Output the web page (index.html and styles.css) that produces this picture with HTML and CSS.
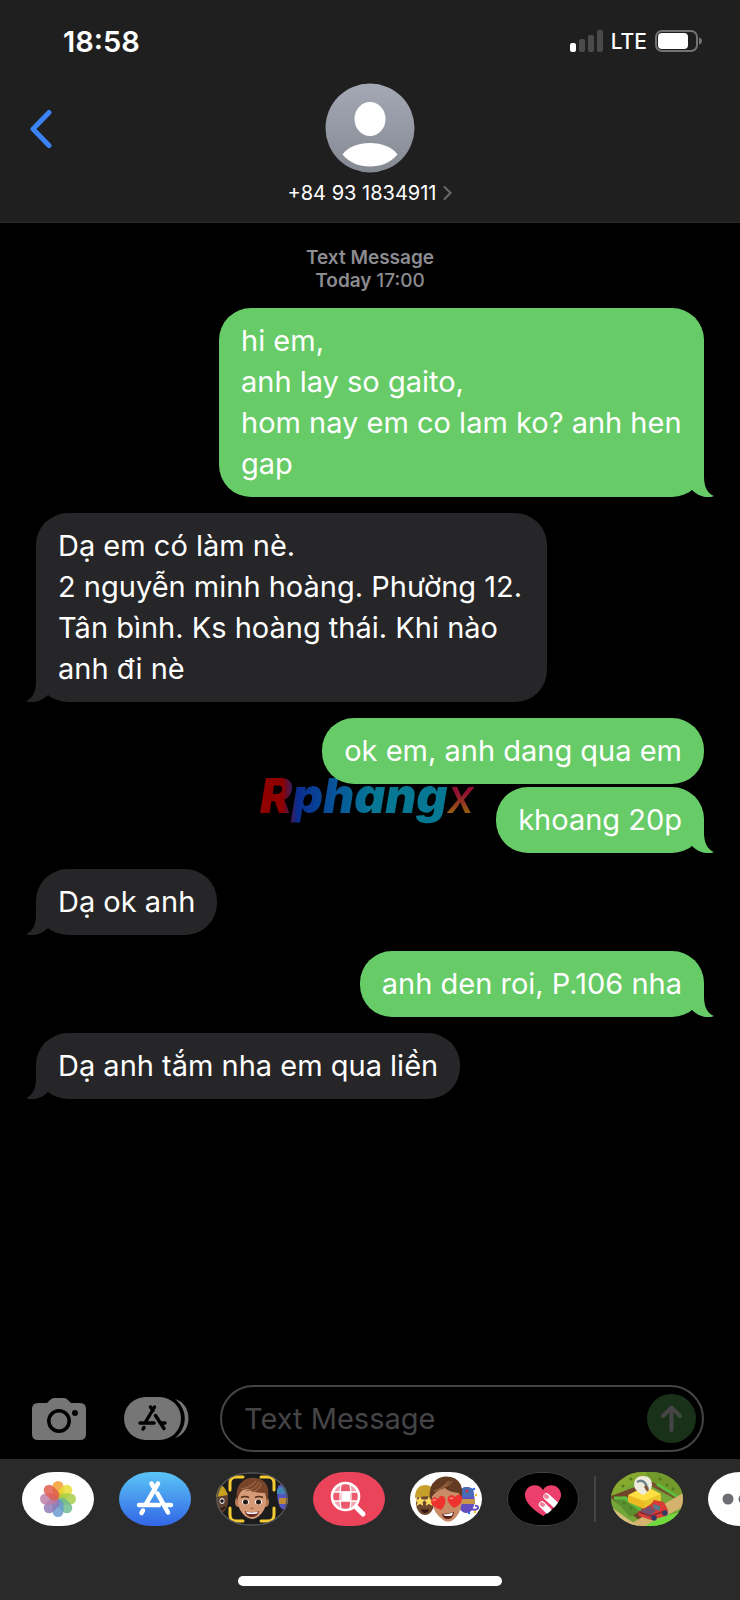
FILE: index.html
```html
<!DOCTYPE html>
<html lang="vi">
<head>
    <meta charset="UTF-8">
    <meta name="viewport" content="width=device-width, initial-scale=1.0">
    <title>Messages</title>
    <link rel="stylesheet" href="styles.css">
</head>
<body>
    <header class="header">
        <div class="status-bar">
            <time class="clock">18:58</time>
            <div class="status-icons">
                <svg width="33" height="22" viewBox="0 0 33 22">
                    <rect x="0" y="13" width="6" height="9" rx="2" fill="#fff"/>
                    <rect x="9" y="9" width="6" height="13" rx="2" fill="#4b4b4b"/>
                    <rect x="18" y="5" width="6" height="17" rx="2" fill="#4b4b4b"/>
                    <rect x="27" y="0" width="6" height="22" rx="2" fill="#4b4b4b"/>
                </svg>
                <span class="network">LTE</span>
                <svg width="47" height="22" viewBox="0 0 47 22">
                    <rect x="1" y="1" width="41" height="20" rx="6" fill="none" stroke="#737373" stroke-width="2"/>
                    <rect x="3" y="3" width="30" height="16" rx="4" fill="#fff"/>
                    <path d="M44 7.500q3 1 3 3.500t-3 3.500z" fill="#737373"/>
                </svg>
            </div>
        </div>
        <div class="contact-bar">
            <button type="button" class="back-button" aria-label="Back">
                <svg width="24" height="40" viewBox="0 0 24 40">
                    <path d="M20 3.500 4 20l16 16.500" fill="none" stroke="#3a82f6" stroke-width="5" stroke-linecap="round" stroke-linejoin="round"/>
                </svg>
            </button>
            <a href="#contact" class="contact">
                <svg width="90" height="90" viewBox="0 0 90 90">
                    <defs>
                        <linearGradient id="avatarBg" x1="0" y1="0" x2="0" y2="1">
                            <stop offset="0" stop-color="#a5a9b6"/>
                            <stop offset="1" stop-color="#858992"/>
                        </linearGradient>
                    </defs>
                    <circle cx="45" cy="45" r="44.500" fill="url(#avatarBg)"/>
                    <ellipse cx="45" cy="36" rx="15.500" ry="17" fill="#fff"/>
                    <path d="M17.500 71.500C23 64 33 60 45 60s22 4 27.500 11.500C65 80 56 83.500 45 83.500S25 80 17.500 71.500z" fill="#fff"/>
                </svg>
                <span class="contact-name">+84 93 1834911
                    <svg width="9" height="14" viewBox="0 0 9 14">
                        <path d="M1.500 1 7.500 7l-6 6" fill="none" stroke="#6a6a6d" stroke-width="2" stroke-linecap="round"/>
                    </svg>
                </span>
            </a>
        </div>
    </header>

    <main class="messages">
        <div class="watermark" aria-hidden="true"><span class="watermark-main">Rphang</span><span class="watermark-x">x</span></div>
        <p class="stamp">Text Message<br>Today <span class="stamp-time">17:00</span></p>
        <p class="bubble sent tail">hi em,<br>anh lay so gaito,<br>hom nay em co lam ko? anh hen gap</p>
        <p class="bubble received tail">Dạ em có làm nè.<br>2 nguyễn minh hoàng. Phường 12. Tân bình. Ks hoàng thái. Khi nào anh đi nè</p>
        <p class="bubble sent">ok em, anh dang qua em</p>
        <p class="bubble sent tail follow">khoang 20p</p>
        <p class="bubble received tail">Dạ ok anh</p>
        <p class="bubble sent tail">anh den roi, P.106 nha</p>
        <p class="bubble received tail">Dạ anh tắm nha em qua liền</p>
    </main>

    <form class="composer">
        <button type="button" class="tool-button" aria-label="Camera">
            <svg width="54" height="42" viewBox="0 0 54 42">
                <path d="M6 5h9l3-3q2-2 4-2h10q2 0 4 2l3 3h9q6 0 6 6v25q0 6-6 6H6q-6 0-6-6V11q0-6 6-6z" fill="#767676"/>
                <circle cx="27" cy="23" r="10.200" fill="none" stroke="#000" stroke-width="3.500"/>
                <circle cx="43" cy="15" r="3" fill="#000"/>
            </svg>
        </button>
        <button type="button" class="tool-button" aria-label="Apps">
            <svg width="66" height="43" viewBox="0 0 66 43">
                <rect x="0" y="0" width="57" height="43" rx="21.500" fill="#767676"/>
                <path d="M51 2C69 7 69 35 51 41C64 31 64 12 51 2z" fill="#767676"/>
                <g fill="none" stroke="#000" stroke-width="3.400" stroke-linecap="round">
                    <path d="M30.500 10 21.500 25M26.500 10l2.500 3.500M31.500 18.500 40 31.500M16 26h14M36.500 26H41M20 30.500l-1 1.500"/>
                </g>
            </svg>
        </button>
        <div class="field">
            <input type="text" class="field-input" placeholder="Text Message" aria-label="Text Message">
            <button type="submit" class="send-button" aria-label="Send">
                <svg width="49" height="49" viewBox="0 0 49 49">
                    <path d="M24.500 36V14M16 22l8.500-8.500L33 22" fill="none" stroke="#454545" stroke-width="4" stroke-linecap="round" stroke-linejoin="round"/>
                </svg>
            </button>
        </div>
    </form>

    <footer class="drawer">
        <nav class="apps">
            <button type="button" class="app app-white" aria-label="Photos">
                <svg viewBox="0 0 72 54">
                    <g fill-opacity=".82">
                        <rect x="30.500" y="9" width="11" height="18" rx="5.500" fill="#f39b28"/>
                        <rect x="30.500" y="9" width="11" height="18" rx="5.500" fill="#e8dc2c" transform="rotate(45 36 27)"/>
                        <rect x="30.500" y="9" width="11" height="18" rx="5.500" fill="#a5cc44" transform="rotate(90 36 27)"/>
                        <rect x="30.500" y="9" width="11" height="18" rx="5.500" fill="#6dba8c" transform="rotate(135 36 27)"/>
                        <rect x="30.500" y="9" width="11" height="18" rx="5.500" fill="#6598d0" transform="rotate(180 36 27)"/>
                        <rect x="30.500" y="9" width="11" height="18" rx="5.500" fill="#8d77b4" transform="rotate(225 36 27)"/>
                        <rect x="30.500" y="9" width="11" height="18" rx="5.500" fill="#bb7ba5" transform="rotate(270 36 27)"/>
                        <rect x="30.500" y="9" width="11" height="18" rx="5.500" fill="#e05a4a" transform="rotate(315 36 27)"/>
                    </g>
                </svg>
            </button>
            <button type="button" class="app app-store" aria-label="App Store">
                <svg viewBox="0 0 72 54">
                    <path d="M39 11.500 27 32M32.500 11.500l3.500 6M38.500 21.500 49 40.500M20 33h20M46 33h6M24 38.500l-1.500 2.500" fill="none" stroke="#fff" stroke-width="4.500" stroke-linecap="round"/>
                </svg>
            </button>
            <button type="button" class="app app-memoji" aria-label="Memoji">
                <svg viewBox="0 0 72 54">
                    <ellipse cx="2" cy="28" rx="10" ry="14" fill="#60412f"/>
                    <path d="M0 11q8 1 12 12l-12 2z" fill="#c7a01e"/>
                    <ellipse cx="6" cy="29" rx="2.500" ry="3" fill="#ddd"/><circle cx="6" cy="29" r="1.700" fill="#1c1210"/>
                    <path d="M2 38q4 0 7-3" fill="none" stroke="#2c1a12" stroke-width="2"/>
                    <path d="M62 14q6-4 12 0v22q-6 4-10-1-4-8-2-21z" fill="#5355c2"/>
                    <path d="M61 17q6-4 11 0v5H61z" fill="#4285b5"/>
                    <rect x="63" y="26" width="9" height="6" fill="#bd8a35"/>
                    <ellipse cx="22" cy="30" rx="3" ry="5" fill="#b97a55"/>
                    <ellipse cx="50" cy="30" rx="3" ry="5" fill="#b97a55"/>
                    <path d="M22 20q0-10 14-10t14 10v11q-1 8-7 13-7 6-14 0-6-5-7-13z" fill="#d69b76"/>
                    <path d="M21 29Q19 15 26 10q5-5 14-4 10 1 12 11 1 8-1 12l-2-8q-12 0-17-4-7 0-9 6z" fill="#78452a"/>
                    <path d="M25 17q9-1 15-8M30 19q10-2 13-9M36 20q9-3 9-9" fill="none" stroke="#9e6441" stroke-width="1.200"/>
                    <ellipse cx="29.500" cy="30" rx="3.500" ry="2.800" fill="#fff"/><ellipse cx="42.500" cy="30" rx="3.500" ry="2.800" fill="#fff"/>
                    <circle cx="29.500" cy="30" r="2.500" fill="#251914"/><circle cx="42.500" cy="30" r="2.500" fill="#251914"/>
                    <path d="M25 25.500q4-2 8 0M39 25.500q4-2 8 0" fill="none" stroke="#513020" stroke-width="1.600"/>
                    <path d="M34.500 36q1.500 1 3 0" fill="none" stroke="#a5654a" stroke-width="1.500"/>
                    <path d="M29 39q7 2.500 14 0-1 6-7 6t-7-6z" fill="#692a25"/>
                    <path d="M30 39.500q6 2 12 0l-1 2q-5 1-10 0z" fill="#fff"/>
                    <path d="M14 18v-7q0-6 6-6h7M45 5h7q6 0 6 6v7M58 36v7q0 6-6 6h-7M27 49h-7q-6 0-6-6v-7" fill="none" stroke="#f3ca32" stroke-width="3" stroke-linecap="round"/>
                    <rect x="1" y="1" width="70" height="52" rx="31" ry="26" fill="none" stroke="#555" stroke-width="1.500"/>
                </svg>
            </button>
            <button type="button" class="app app-images" aria-label="#images">
                <svg viewBox="0 0 72 54">
                    <circle cx="32.500" cy="24.500" r="13" fill="#f7a1ad"/>
                    <path d="M28 19h9v-7h-9zM28 29h9v8h-9zM20 20h8v9h-8zM37 20h8v9h-8z" fill="#ec5a6d"/>
                    <rect x="28.500" y="20" width="8.500" height="9" fill="#fff"/>
                    <path d="M28 12q-2 13 0 25M37 12q2 13 0 25M19 20h27M19 29h27" fill="none" stroke="#fff" stroke-width="1.300"/>
                    <circle cx="32.500" cy="24.500" r="13.500" fill="none" stroke="#fff" stroke-width="2.600"/>
                    <path d="m43 35 7 7" stroke="#fff" stroke-width="5" stroke-linecap="round"/>
                </svg>
            </button>
            <button type="button" class="app app-white" aria-label="Memoji stickers">
                <svg viewBox="0 0 72 54">
                    <ellipse cx="15" cy="31" rx="9" ry="12" fill="#6e472e"/>
                    <path d="M5 26q0-13 11-13 8 0 9 12-10-2-20 1z" fill="#c6a02a"/>
                    <path d="m10 24 1.600 3.200 3.500.5-2.500 2.500.6 3.500-3.200-1.700-3.200 1.700.6-3.500-2.500-2.500 3.500-.5zM19 24l1.600 3.200 3.500.5-2.500 2.500.6 3.500-3.200-1.700-3.200 1.700.6-3.500-2.500-2.500 3.500-.5z" fill="#f8d960"/>
                    <path d="M11 37q4 1 8 0-1 4-4 4t-4-4z" fill="#301711"/>
                    <path d="M51 17q5-4 12 0l2 12q-2 12-8 12t-8-6z" fill="#624ec0"/>
                    <path d="M51 17q5-4 12 0l1 8H50z" fill="#456db8"/>
                    <path d="M51 27h14v5H51z" fill="#c6964b"/>
                    <circle cx="57" cy="19" r="1.500" fill="#d4343a"/>
                    <path d="M60 37q7 2 8-1 0-3-3-2" fill="none" stroke="#624ec0" stroke-width="2"/>
                    <g fill="#356bed"><circle cx="64" cy="17" r="1.200"/><circle cx="59" cy="41" r="1.200"/></g>
                    <g fill="#f4bb35"><circle cx="66" cy="23" r="1.200"/><circle cx="65" cy="40" r="1.200"/></g>
                    <path d="M22 21q1-11 15-11 14 0 15 12v9q-2 12-9 17-6 4-11-1-8-6-10-16z" fill="#c98c66"/>
                    <path d="M20 28Q18 14 26 8q6-5 15-3 9 2 11 12 1 6-1 11l-2-7q-11-1-14-5-10 2-15 12z" fill="#633b23"/>
                    <path d="M24 19q9-2 15-10M31 16q8-2 11-7" fill="none" stroke="#956340" stroke-width="1.300"/>
                    <path d="M31 38q-11-4-10-10 3-5 7-1 3-6 7-1 2 6-4 12z" fill="#ee332e"/>
                    <path d="M44 36q-8-6-6-11 4-4 7 0 4-5 7 0 1 7-8 11z" fill="#ee332e"/>
                    <path d="M23 29q1-2 3-1M40 27q1-2 3 0" fill="none" stroke="#ff887b" stroke-width="1.500"/>
                    <path d="M32 42q6 0 12-2-1 7-6 7t-6-5z" fill="#5a1d1b"/>
                    <path d="M33 42.500q5 0 10-2l-1 3q-4 1-8 0z" fill="#fff"/>
                </svg>
            </button>
            <button type="button" class="app app-touch" aria-label="Digital Touch">
                <svg viewBox="0 0 72 54">
                    <path d="M36 44Q17 32 18 22c1-9 13-12 18-4 5-8 17-5 18 4q1 10-18 22z" fill="#ec3f6b"/>
                    <path d="m39.500 24.500 11 10M35 32.500l7 7" stroke="#fff" stroke-width="6.500" stroke-linecap="round"/>
                    <path d="M36 44.500Q50 36 54 25l6 10-16 15z" fill="#000"/>
                    <path d="m38.500 24 1.500 1M34.500 32l1.500 1" stroke="#f1849f" stroke-width="4" stroke-linecap="round"/>
                </svg>
            </button>
        </nav>
        <div class="divider"></div>
        <nav class="apps">
            <button type="button" class="app app-farm" aria-label="Township">
                <svg viewBox="0 0 72 54">
                    <rect width="72" height="54" fill="#75a63a"/>
                    <path d="M0 0h28L0 24z" fill="#6d4a29"/>
                    <path d="M0 14 22 0h17L4 24H0z" fill="#86a92f"/>
                    <path d="M35 0h37v27L38 7z" fill="#72992c"/>
                    <path d="m36 7 36 19v5L36 12z" fill="#77512b"/>
                    <path d="M0 24 24 15l24 20-20 13L0 26z" fill="#714527"/>
                    <path d="m3 27 12-3 16 14-12 7z" fill="#5b9030"/>
                    <path d="M3 26h11l16 12M46 12l24 15-14 9" fill="none" stroke="#5dbd3f" stroke-width="3"/>
                    <path d="M16 54 72 21v14L35 54z" fill="#d5b36f"/>
                    <path d="M0 35 27 54H0z" fill="#d9bd7c"/>
                    <path d="M34 54q18-12 38-14v14z" fill="#71d83e"/>
                    <path d="m17 23 18-9 15 8-17 12z" fill="#ffdf43"/>
                    <path d="m17 23 16 6v8l-16-7z" fill="#efb922"/>
                    <path d="m33 29 17-7v7l-17 8z" fill="#e9c72c"/>
                    <path d="m27 40 13-8 3-4 10 2 4 8-2 6-15 4-12-4z" fill="#d83d35"/>
                    <path d="m29 39 10-5 6 5-8 6z" fill="#70516d"/>
                    <path d="m42 32 7 2v5l-6-2z" fill="#53798f"/>
                    <path d="m28 40 12 4 14-5" fill="none" stroke="#8d2834" stroke-width="1.500"/>
                    <circle cx="43" cy="46" r="2.800" fill="#353a64"/><circle cx="54" cy="41" r="2.800" fill="#353a64"/>
                    <path d="M32 23q-9-5-9-10 0-9 9-9t9 9q0 5-9 10z" fill="#eeeadc"/>
                    <path d="M26 10q5-3 8 1l3 6" fill="none" stroke="#6f838a" stroke-width="2.500"/>
                    <path d="m34 14 3 5" stroke="#875332" stroke-width="2.500"/>
                    <g fill="#4f7c21"><circle cx="12" cy="14" r="1.500"/><circle cx="20" cy="7" r="1.500"/><circle cx="49" cy="7" r="1.500"/><circle cx="56" cy="13" r="1.500"/><circle cx="62" cy="17" r="1.500"/><circle cx="13" cy="31" r="1.500"/><circle cx="20" cy="36" r="1.500"/></g>
                </svg>
            </button>
            <button type="button" class="app app-white" aria-label="More">
                <svg viewBox="0 0 72 54">
                    <g fill="#6c6c74"><circle cx="20" cy="27" r="5.500"/><circle cx="36" cy="27" r="5.500"/><circle cx="52" cy="27" r="5.500"/></g>
                </svg>
            </button>
        </nav>
        <div class="home-indicator"></div>
    </footer>
</body>
</html>
```
FILE: styles.css
```css
* {
    box-sizing: border-box;
}
body {
    display: flex;
    flex-direction: column;
    min-height: 100vh;
    margin: 0;
    background-color: #000;
    color: #fff;
    font-family: Inter, "Noto Sans", sans-serif;
}
button {
    padding: 0;
    border: none;
    background: none;
    cursor: pointer;
}
svg {
    display: block;
}
p {
    margin: 0;
}

/* header */
.header {
    padding-bottom: 16px;
    background-color: #1f1f1f;
    border-bottom: 1px solid #2a2a2a;
}
.status-bar {
    display: flex;
    justify-content: space-between;
    align-items: center;
    height: 82px;
    padding: 0 38px 0 63px;
}
.clock {
    font-size: 29px;
    font-weight: 600;
}
.status-icons {
    display: flex;
    align-items: center;
    gap: 8px;
}
.network {
    font-size: 21px;
    font-weight: 500;
}
.contact-bar {
    display: grid;
    grid-template-columns: 1fr auto 1fr;
    align-items: start;
    padding: 1px 29px 0;
}
.back-button {
    justify-self: start;
    padding-top: 26px;
}
.contact {
    display: flex;
    flex-direction: column;
    align-items: center;
    gap: 7px;
    color: #fff;
    text-decoration: none;
}
.contact-name {
    display: flex;
    align-items: center;
    gap: 7px;
    font-size: 20px;
    line-height: 26px;
}

/* conversation */
.messages {
    position: relative;
    display: flex;
    flex: 1;
    flex-direction: column;
    align-items: flex-start;
    gap: 16px;
    padding: 23px 36px;
}
.stamp {
    align-self: center;
    color: #8c8c91;
    font-size: 19px;
    font-weight: 600;
    line-height: 23px;
    text-align: center;
}
.stamp-time {
    font-weight: 500;
}
.bubble {
    position: relative;
    max-width: 511px;
    padding: 12px 22px 13px;
    border-radius: 32px;
    font-size: 29px;
    line-height: 41px;
}
.sent {
    align-self: flex-end;
    max-width: 485px;
    background-color: #67cb67;
}
.received {
    background-color: #262628;
}
.follow {
    margin-top: -13px;
}
.tail::after {
    content: "";
    position: absolute;
    right: -10px;
    bottom: 0;
    width: 31px;
    height: 32px;
    background-color: inherit;
    clip-path: path("M0 0H21V12C21 22 25 29 31 31C24 34 15 31 9 25Z");
}
.received.tail::after {
    right: auto;
    left: -10px;
    transform: scaleX(-1);
}
.watermark {
    position: absolute;
    top: 545px;
    left: 260px;
    font-size: 48px;
    font-style: italic;
    line-height: 56px;
}
.watermark-main {
    background: linear-gradient(90deg, #8f0000 12%, #0a2d90 20%, #07589a 42%, #067894 60%);
    background-clip: text;
    -webkit-background-clip: text;
    color: transparent;
    font-weight: 900;
}
.watermark-x {
    background: linear-gradient(#8f1030 45%, #966010 80%);
    background-clip: text;
    -webkit-background-clip: text;
    color: transparent;
    font-weight: 500;
}

/* composer */
.composer {
    display: flex;
    align-items: center;
    padding: 0 36px 7px 32px;
}
.tool-button {
    margin-right: 38px;
}
.tool-button + .field {
    margin-left: -8px;
}
.field {
    display: flex;
    flex: 1;
    align-items: center;
    min-width: 0;
    height: 67px;
    padding: 0 6px 0 22px;
    border: 2px solid #454545;
    border-radius: 34px;
}
.field-input {
    flex: 1;
    min-width: 0;
    padding: 0;
    border: none;
    outline: none;
    background: none;
    color: #fff;
    font-family: inherit;
    font-size: 29px;
}
.field-input::placeholder {
    color: #454547;
}
.send-button {
    flex: none;
    border-radius: 50%;
    background-color: #193019;
}

/* app drawer */
.drawer {
    position: relative;
    display: flex;
    align-items: flex-start;
    height: 141px;
    padding: 13px 0 0 22px;
    background-color: #2a2a2a;
    overflow: hidden;
}
.apps {
    display: flex;
    gap: 25px;
}
.app {
    flex: none;
    width: 72px;
    height: 54px;
    border-radius: 32px / 27px;
    overflow: hidden;
}
.app-white {
    background-color: #fff;
}
.app-store {
    background: linear-gradient(#5ac4f6, #3366e6);
}
.app-memoji {
    background-color: #1c1c1c;
}
.app-images {
    background-color: #eb445a;
}
.app-touch {
    background-color: #000;
    box-shadow: inset 0 0 0 1px #444;
}
.divider {
    flex: none;
    width: 2px;
    height: 46px;
    margin: 4px 15px;
    background-color: #454545;
}
.home-indicator {
    position: absolute;
    bottom: 14px;
    left: 50%;
    width: 264px;
    height: 10px;
    margin-left: -132px;
    border-radius: 5px;
    background-color: #fff;
}
```
